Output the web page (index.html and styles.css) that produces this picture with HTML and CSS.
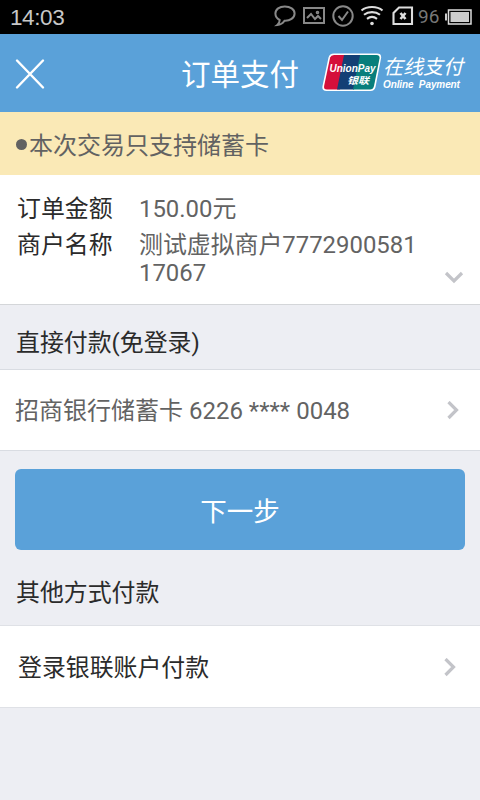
FILE: index.html
```html
<!DOCTYPE html>
<html lang="zh-CN">
<head>
<meta charset="utf-8">
<title>订单支付</title>
<link rel="stylesheet" href="styles.css">
</head>
<body>
<div class="status">
  <span class="clock">14:03</span>
  <div class="indicators">
    <svg class="chat" width="22" height="22" viewBox="0 0 22 22"><path d="M10.8 1.4C5.5 1.4 1.4 4.3 1.400 8.600c0 3 1.700 5.100 4.300 6.400 0 2.100-1 3.900-2.400 5 3.100-.3 5.700-2 7.200-4.300 5.400.3 10.100-2.800 10.100-7.300 0-4.200-4.400-7-9.800-7z"/></svg>
    <svg class="photo" width="22" height="18" viewBox="0 0 22 18"><rect x="1" y="1" width="20" height="15"/><path d="M4 11l4-4 4 5 3-3 3 3"/><circle cx="14.500" cy="5.500" r=".8"/></svg>
    <svg class="check" width="22" height="22" viewBox="0 0 22 22"><circle cx="11" cy="11" r="9.700"/><path d="M6.500 11l3.500 4 6-8.500"/></svg>
    <svg class="wifi" width="24" height="22" viewBox="0 0 24 22"><path d="M1.500 5.500C7 .8 17 .8 22.500 5.500M4 9.800c4.500-3.600 11.500-3.600 16 0M7 13.800c3-2.300 7-2.300 10 0"/><circle cx="12" cy="18.500" r="1.800"/></svg>
    <svg class="sim" width="22" height="20" viewBox="0 0 22 20"><path d="M7 1.500h13v16.500h-18.500V7z"/><path class="sim-x" d="M8.500 7l5 6m0-6l-5 6"/></svg>
    <span class="level">96</span>
    <svg class="battery" width="27" height="16" viewBox="0 0 27 16"><path class="tip" d="M0 4.500h2v7H0z"/><rect class="shell" x="3.500" y="1" width="22.500" height="14"/><rect class="charge" x="5.500" y="3" width="18.500" height="10"/></svg>
  </div>
</div>
<header class="header">
  <svg class="close" width="30" height="32" viewBox="0 0 30 32"><path d="M2 2.500l26 27M28 2.500l-26 27"/></svg>
  <h1 class="title">订单支付</h1>
  <div class="brand">
    <svg class="logo" width="60" height="41" viewBox="0 0 60 41">
      <path fill="#fff" d="M12 1.500h43q5 0 4 5l-5.500 28.500q-.9 4-5 4H4.500q-5 0-4-5L6.500 5.500q1-4 5.500-4z"/>
      <path fill="#d50f3a" d="M12 3h13l-7 34.500H5q-3.500 0-2.900-3.500l6-28.500Q9 3 12 3z"/>
      <path fill="#133f75" d="M22 3h17l-7 34.500H15z"/>
      <path fill="#087e7c" d="M38 3h16.500q3.500 0 3 3.500l-5.500 27.500q-.8 3.500-4 3.500H31z"/>
      <text class="logo-en" x="7.500" y="20" textLength="46" lengthAdjust="spacingAndGlyphs">UnionPay</text>
      <text class="logo-cn" x="25" y="32" textLength="22" lengthAdjust="spacingAndGlyphs">银联</text>
    </svg>
    <div class="brand-text">
      <span class="brand-cn">在线支付</span>
      <span class="brand-en">Online&nbsp; Payment</span>
    </div>
  </div>
</header>
<main>
  <div class="notice"><i class="dot"></i>本次交易只支持储蓄卡</div>
  <dl class="details">
    <dt>订单金额</dt><dd>150.00元</dd>
    <dt>商户名称</dt><dd class="merchant">测试虚拟商户7772900581<br>17067</dd>
    <svg class="down" width="20" height="14" viewBox="0 0 20 14"><path d="M2 2l8 8 8-8"/></svg>
  </dl>
  <h2 class="section">直接付款(免登录)</h2>
  <div class="row card">招商银行储蓄卡 6226 **** 0048
    <svg class="right" width="14" height="20" viewBox="0 0 14 20"><path d="M2.500 1l8 8-8 8"/></svg>
  </div>
  <button class="next">下一步</button>
  <h2 class="section other">其他方式付款</h2>
  <div class="row login">登录银联账户付款
    <svg class="right" width="14" height="20" viewBox="0 0 14 20"><path d="M2.500 1l8 8-8 8"/></svg>
  </div>
</main>
</body>
</html>
```
FILE: styles.css
```css
* { box-sizing: border-box; }
body {
  margin: 0;
  min-height: 800px;
  background: #edeef3;
  color: #2b2b2b;
  font: 23.9px/28px Roboto, "Noto Sans CJK SC", sans-serif;
}
svg { display: block; flex: none; fill: none; }
h1, h2, dl, dd { margin: 0; font-weight: 400; }

.status {
  display: flex;
  justify-content: space-between;
  height: 34px;
  padding: 0 8px 0 10px;
  background: #000;
  color: #c8c8c8;
}
.clock { font: 22.5px/36px "Liberation Sans", sans-serif; letter-spacing: -.4px; }
.indicators { display: flex; align-items: center; height: 32px; }
.indicators svg { stroke: #888; stroke-width: 2; }
.photo { margin-left: 7px; }
.check { margin-left: 7px; }
.indicators .wifi, .indicators .sim { stroke: #ddd; stroke-width: 2.1; }
.wifi { margin-left: 6px; }
.wifi circle { fill: #ddd; stroke: none; }
.sim { margin-left: 8px; }
.indicators .sim-x { stroke-width: 2.6; }
.level { margin: 2px 0 0 4px; color: #777; font-size: 19px; width: 24px; }
.battery { margin: 2px 0 0 3px; }
.battery .tip, .battery .charge { fill: #ccc; stroke: none; }
.battery .shell { stroke: #ddd; stroke-width: 1.5; }

.header {
  display: flex;
  height: 78px;
  padding-left: 15px;
  background: #5aa1d9;
  color: #fff;
}
.close { margin-top: 24px; stroke: #fff; stroke-width: 2.4; stroke-linecap: round; }
.title { margin-left: 136px; width: 120px; font-size: 29.5px; line-height: 83px; white-space: nowrap; }
.brand { display: flex; margin: 18px 0 0 21px; }
.logo-en { fill: #fff; font: italic 700 10px "Liberation Sans", sans-serif; }
.logo-cn { fill: #fff; font: italic 700 9.5px/9px "Noto Sans CJK SC", sans-serif; }
.brand-text { display: flex; flex-direction: column; margin-left: 1px; white-space: nowrap; }
.brand-cn { font-size: 20px; line-height: 30px; font-style: italic; height: 26px; }
.brand-en { font: italic 700 10px/13px "Liberation Sans", sans-serif; letter-spacing: -.1px; }

.notice {
  display: flex;
  align-items: center;
  height: 63px;
  padding: 4px 17px 0 16px;
  background: #fae9b6;
  color: #626262;
  font-size: 24px;
}
.dot { width: 11px; height: 11px; margin: -2px 2px 0 0; border-radius: 50%; background: #626262; }

.details {
  position: relative;
  display: grid;
  grid-template-columns: 122px 1fr;
  row-gap: 8px;
  align-content: start;
  height: 130px;
  padding: 20px 17px 0;
  background: #fff;
  border-bottom: 1px solid #d4d6d9;
}
.details dd { color: #636363; }
.down { position: absolute; right: 16px; top: 96px; }
.down, .right { stroke: #c3c4c9; stroke-width: 3.2; }

.section { height: 64px; padding: 24px 16px 0; font-size: 23.9px; line-height: 28px; }
.row {
  display: flex;
  align-items: center;
  justify-content: space-between;
  height: 82px;
  background: #fff;
  border: solid #d9dce2;
  border-width: 1px 0;
}
.card { padding: 1px 20px 0 15px; color: #636363; font-size: 24px; }
.next {
  display: block;
  width: 450px;
  height: 81px;
  margin: 18px 15px 0;
  padding: 4px 0 0;
  border: 0;
  border-radius: 6px;
  background: #5aa1d9;
  color: #fff;
  font: 26.5px/77px Roboto, "Noto Sans CJK SC", sans-serif;
}
.other { height: 75px; padding-top: 29px; }
.login { height: 83px; padding: 2px 23px 0 18px; border-color: #dfe1e6; }
```
